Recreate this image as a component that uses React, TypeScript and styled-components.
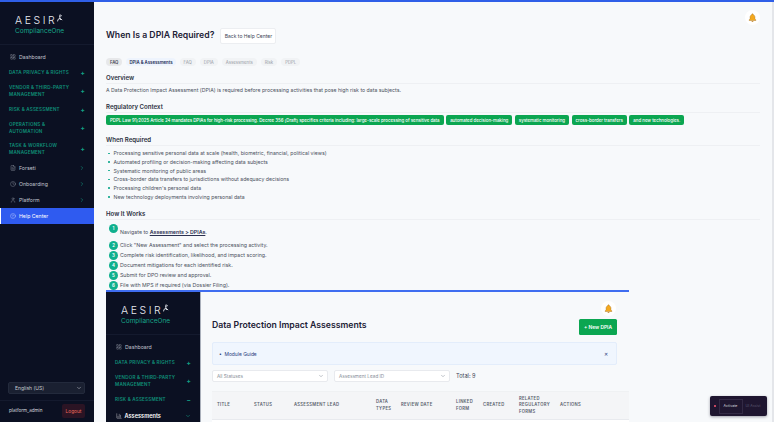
import { BarChart3, ChevronDown, ChevronRight, CircleHelp, Clock, FileText, LayoutGrid, User } from 'lucide-react';
import styled, { createGlobalStyle } from 'styled-components';

const GlobalStyle = createGlobalStyle`
  html, body {
    margin: 0;
    height: 422px;
    overflow: hidden;
    font-family: Inter, 'Liberation Sans', sans-serif;
    background: #f7f9fb;
  }
  * { box-sizing: border-box; }
`;

const Page = styled.div`
  position: relative;
  display: flex;
  width: 774px;
  height: 422px;
  overflow: hidden;
  border-top: 2px solid #2f5fe8;
`;

const Sidebar = styled.aside`
  flex: 0 0 94px;
  width: 94px;
  height: 420px;
  display: flex;
  flex-direction: column;
  background: #0b1022;
  color: #c6cad3;
`;

const LogoBlock = styled.div`
  height: 43px;
  padding: 12px 0 0 15px;
  border-bottom: 1px solid #141a2e;
  flex: none;
`;

const LogoWord = styled.div`
  display: flex;
  align-items: flex-start;
  height: 13px;
  font-size: 10.5px;
  line-height: 13px;
  letter-spacing: 2.6px;
  font-weight: 300;
  color: #e8eaf0;
`;

const LogoSub = styled.div`
  font-size: 6.5px;
  line-height: 8px;
  color: #17a589;
`;

const Nav = styled.nav`
  display: flex;
  flex-direction: column;
  padding-top: 4px;
`;

const NavItem = styled.div<{ $active?: boolean; $strong?: boolean }>`
  position: relative;
  display: flex;
  align-items: center;
  gap: ${(p) => (p.$strong ? 2.5 : 3)}px;
  height: 16px;
  padding: 0 9px 0 ${(p) => (p.$active ? 9 : 10)}px;
  font-size: ${(p) => (p.$strong ? 5.6 : 5.2)}px;
  font-weight: ${(p) => (p.$strong ? 600 : 400)};
  color: ${(p) => (p.$active || p.$strong ? '#fff' : '#c0c4ce')};
  background-color: ${(p) => (p.$active ? '#2f5bf0' : 'transparent')};
  border-left: ${(p) => (p.$active ? '1px solid #fff' : 'none')};
  background-image: ${(p) =>
    p.$active ? 'radial-gradient(rgba(255,255,255,.16) .5px, transparent .6px)' : 'none'};
  background-size: 4px 4px;
  svg { flex: none; }
`;

const NavLabel = styled.span`
  flex: 1;
`;

const NavGroup = styled.div<{ $tall?: boolean }>`
  display: flex;
  align-items: center;
  justify-content: space-between;
  min-height: ${(p) => (p.$tall ? 21 : 16)}px;
  padding: 0 9px 0 9px;
  font-size: 4.6px;
  line-height: 6.4px;
  font-weight: 600;
  letter-spacing: .2px;
  color: #0f8f78;
`;

const PlusMark = styled.span`
  font-size: 6.5px;
  font-weight: 700;
  color: #12a186;
`;

const SidebarFoot = styled.div`
  margin-top: auto;
  flex: none;
`;

const LangSelect = styled.div`
  display: flex;
  align-items: center;
  justify-content: space-between;
  height: 12px;
  margin: 0 9px 6px 8px;
  padding: 0 2px 0 6px;
  border-radius: 2px;
  background: #1a2031;
  border: 1px solid #232a3c;
  font-size: 5px;
  color: #c6cad3;
`;

const UserRow = styled.div`
  display: flex;
  align-items: center;
  justify-content: space-between;
  height: 20px;
  margin-bottom: 2px;
  padding: 0 9px;
  border-top: 1px solid #141a2e;
  font-size: 4.6px;
  color: #d5d8df;
`;

const LogoutButton = styled.div`
  display: flex;
  align-items: center;
  justify-content: center;
  width: 23px;
  height: 14px;
  border-radius: 2px;
  background: #2b1424;
  color: #f06a5c;
  font-size: 4.8px;
`;

const Main = styled.main`
  flex: 1;
  min-width: 0;
  padding: 26px 0 0 12px;
  background: #f7f9fb;
`;

const ScrollTrack = styled.div`
  flex: 0 0 2px;
  background: #e4e6ea;
`;

const BellCircle = styled.div<{ $top: number; $left: number }>`
  position: absolute;
  top: ${(p) => p.$top}px;
  left: ${(p) => p.$left}px;
  display: flex;
  align-items: center;
  justify-content: center;
  width: 15px;
  height: 15px;
  border-radius: 50%;
  background: #fff;
`;

const HeaderRow = styled.div`
  display: flex;
  align-items: center;
  gap: 6px;
  height: 16px;
`;

const Title = styled.h1`
  margin: 0 0 3px;
  font-size: 8.7px;
  font-weight: 600;
  color: #1d2236;
  line-height: 12px;
`;

const BackButton = styled.div`
  display: flex;
  align-items: center;
  justify-content: center;
  width: 56px;
  height: 16px;
  background: #fff;
  border: 1px solid #eceef1;
  border-radius: 2px;
  font-size: 5px;
  color: #3e4455;
`;

const ChipRow = styled.div`
  display: flex;
  gap: 4px;
  margin-top: 14px;
`;

const Chip = styled.span<{ $tone?: 'gray' | 'blue' }>`
  display: flex;
  align-items: center;
  height: 8px;
  padding: 0 ${(p) => (p.$tone === 'blue' ? 3 : 4)}px;
  border-radius: 4px;
  font-size: 4.3px;
  font-weight: ${(p) => (p.$tone ? 600 : 400)};
  color: ${(p) => (p.$tone === 'blue' ? '#232c55' : p.$tone === 'gray' ? '#4a4f5c' : '#9499a3')};
  background: ${(p) =>
    p.$tone === 'blue' ? '#eef4fd' : p.$tone === 'gray' ? '#e7e8ea' : '#f1f3f5'};
`;

const Section = styled.section`
  width: 654px;
`;

const SectionTitle = styled.h2<{ $gap: number }>`
  margin: ${(p) => p.$gap}px 0 0;
  padding-bottom: 1px;
  border-bottom: 1px solid #eef0f3;
  font-size: 6.1px;
  line-height: 9px;
  font-weight: 600;
  color: #2b3040;
`;

const Paragraph = styled.p`
  margin: 2px 0 0;
  font-size: 5.2px;
  line-height: 8px;
  color: #4b5160;
`;

const TagRow = styled.div`
  display: flex;
  gap: 2.6px;
  margin-top: 2px;
  letter-spacing: -.02px;
`;

const Tag = styled.span`
  display: flex;
  align-items: center;
  height: 10px;
  padding: 0 4px;
  border-radius: 2px;
  background: #0ba651;
  color: #fff;
  font-size: 4.4px;
  font-weight: 500;
  white-space: nowrap;
`;

const BulletList = styled.ul`
  height: 52px;
  margin: 3px 0 0;
  padding: 0;
  list-style: none;
`;

const Bullet = styled.li`
  display: flex;
  align-items: center;
  gap: 4px;
  height: 8.7px;
  padding-left: 2px;
  font-size: 5.2px;
  color: #4b5160;
  &::before {
    content: '';
    width: 1.5px;
    height: 1.5px;
    border-radius: 50%;
    background: #12a98d;
  }
`;

const StepList = styled.ol`
  margin: 4px 0 0;
  padding: 0;
  list-style: none;
`;

const Step = styled.li<{ $first?: boolean }>`
  display: flex;
  align-items: ${(p) => (p.$first ? 'flex-start' : 'center')};
  gap: 2px;
  height: ${(p) => (p.$first ? 16 : 10)}px;
  padding-left: 3px;
  font-size: 5.25px;
  color: #4b5160;
`;

const StepNum = styled.span`
  display: flex;
  flex: none;
  align-items: center;
  justify-content: center;
  width: 9px;
  height: 9px;
  border-radius: 50%;
  background: #10b08e;
  color: #fff;
  font-size: 4.4px;
  font-weight: 600;
`;

const StepText = styled.span<{ $first?: boolean }>`
  margin-top: ${(p) => (p.$first ? 4 : 0)}px;
  line-height: 8px;
  b {
    font-weight: 600;
    color: #2a3050;
    text-decoration: underline;
  }
`;

const Shot = styled.div`
  position: relative;
  display: flex;
  width: 523px;
  height: 140px;
  border-top: 2px solid #3f6df0;
`;

const ShotMain = styled.div`
  flex: 1;
  min-width: 0;
  padding: 27px 12px 0 11px;
  background: #f7f9fb;
  border-left: 1px solid #aab0bb;
`;

const ShotHead = styled.div`
  display: flex;
  align-items: center;
  justify-content: space-between;
  height: 15px;
`;

const NewButton = styled.div`
  display: flex;
  align-items: center;
  justify-content: center;
  width: 38px;
  height: 16px;
  border-radius: 1.5px;
  background: #0ba651;
  color: #fff;
  font-size: 4.9px;
  font-weight: 600;
`;

const GuideBox = styled.div`
  display: flex;
  align-items: center;
  justify-content: space-between;
  height: 23px;
  margin-top: 8px;
  padding: 0 8px 0 6px;
  border: 1px solid #e3edfb;
  border-radius: 2px;
  background-color: #f0f6fe;
  background-image: radial-gradient(#dfe8f5 .5px, transparent .6px);
  background-size: 4px 4px;
  font-size: 4.9px;
  color: #27387a;
`;

const FilterRow = styled.div`
  display: flex;
  align-items: center;
  gap: 6px;
  margin-top: 5px;
`;

const FilterSelect = styled.div`
  display: flex;
  align-items: center;
  justify-content: space-between;
  width: 116px;
  height: 12px;
  padding: 0 3px 0 4px;
  border: 1px solid #e8eaee;
  border-radius: 2px;
  background: #fff;
  font-size: 4.7px;
  color: #858b96;
`;

const TotalText = styled.span`
  font-size: 5.6px;
  color: #3e4455;
`;

const TableWrap = styled.div`
  width: 417px;
  margin-top: 9px;
  background: #f4f5f7;
  border-top: 1px solid #eff1f3;
`;

const HeadRow = styled.div`
  display: grid;
  grid-template-columns: 37px 40px 82px 25px 55px 27px 36px 41px 40px;
  align-items: center;
  height: 28px;
  padding-left: 5px;
  border-bottom: 1px solid #e8eaee;
  font-size: 4.2px;
  line-height: 6.6px;
  letter-spacing: .3px;
  font-weight: 600;
  color: #585e6c;
`;

const TableBody = styled.div`
  height: 20px;
  background: #fff;
`;

const ActivateBar = styled.div`
  position: absolute;
  top: 394px;
  left: 710px;
  display: flex;
  align-items: center;
  width: 57px;
  height: 20px;
  padding-left: 4px;
  border-radius: 2px;
  background: #1f1630;
  box-shadow: 0 1px 3px rgba(30, 30, 50, .4);
  font-size: 3.6px;
  color: #d8d6de;
`;

const ActivateDot = styled.span`
  width: 1.5px;
  height: 1.5px;
  border-radius: 50%;
  background: #e2506a;
`;

const ActivateBtn = styled.span`
  display: flex;
  align-items: center;
  justify-content: center;
  width: 24px;
  height: 15px;
  margin: 0 3px 0 3px;
  border: 1px solid #332a45;
`;

const ActivateHint = styled.span`
  color: #5e5870;
`;

const LogoFigure = () => (
  <svg width="6" height="9" viewBox="0 0 6 9" fill="none" stroke="#e8eaf0" strokeWidth=".9">
    <path d="M3.2 .4 2.6 2.4 4.8 1.6M2.6 2.4 3 4.4 5.2 6M3 4.4 1 5.4.6 7.4M3 4.4l.6 1.6" />
  </svg>
);

const BellIcon = () => (
  <svg width="9" height="9" viewBox="0 0 24 24">
    <path
      d="M12 2a2 2 0 0 0-2 2v.6C7 5.600 5.500 8.200 5.500 11v4.200L3 18.500V20h18v-1.500l-2.500-3.300V11c0-2.800-1.500-5.400-4.500-6.400V4a2 2 0 0 0-2-2z"
      fill="#f5a91f"
      stroke="#9c6a1a"
      strokeWidth="1"
    />
    <path d="M9.500 21a2.500 2.500 0 0 0 5 0z" fill="#b5761a" />
  </svg>
);

const Brand = () => (
  <LogoBlock>
    <LogoWord>
      AESIR
      <LogoFigure />
    </LogoWord>
    <LogoSub>ComplianceOne</LogoSub>
  </LogoBlock>
);

const OUTER_TAGS = [
  'PDPL Law 91/2025 Article 24 mandates DPIAs for high-risk processing. Decree 356 (Draft) specifies criteria including: large-scale processing of sensitive data',
  'automated decision-making',
  'systematic monitoring',
  'cross-border transfers',
  'and new technologies.',
];

const REQUIRED = [
  'Processing sensitive personal data at scale (health, biometric, financial, political views)',
  'Automated profiling or decision-making affecting data subjects',
  'Systematic monitoring of public areas',
  'Cross-border data transfers to jurisdictions without adequacy decisions',
  "Processing children's personal data",
  'New technology deployments involving personal data',
];

const STEPS = [
  'Click "New Assessment" and select the processing activity.',
  'Complete risk identification, likelihood, and impact scoring.',
  'Document mitigations for each identified risk.',
  'Submit for DPO review and approval.',
  'File with MPS if required (via Dossier Filing).',
];

const TABLE_HEAD = [
  'TITLE',
  'STATUS',
  'ASSESSMENT LEAD',
  <>DATA<br />TYPES</>,
  'REVIEW DATE',
  <>LINKED<br />FORM</>,
  'CREATED',
  <>RELATED<br />REGULATORY<br />FORMS</>,
  'ACTIONS',
];

const App = (): JSX.Element => (
  <>
    <GlobalStyle />
    <Page>
      <Sidebar>
        <Brand />
        <Nav>
          <NavItem>
            <LayoutGrid size={6} strokeWidth={1.2} />
            <NavLabel>Dashboard</NavLabel>
          </NavItem>
          <NavGroup>
            DATA PRIVACY &amp; RIGHTS<PlusMark>+</PlusMark>
          </NavGroup>
          <NavGroup $tall>
            <span>VENDOR &amp; THIRD-PARTY<br />MANAGEMENT</span>
            <PlusMark>+</PlusMark>
          </NavGroup>
          <NavGroup>
            RISK &amp; ASSESSMENT<PlusMark>+</PlusMark>
          </NavGroup>
          <NavGroup $tall>
            <span>OPERATIONS &amp;<br />AUTOMATION</span>
            <PlusMark>+</PlusMark>
          </NavGroup>
          <NavGroup $tall>
            <span>TASK &amp; WORKFLOW<br />MANAGEMENT</span>
            <PlusMark>+</PlusMark>
          </NavGroup>
          <NavItem>
            <FileText size={6} strokeWidth={1.2} />
            <NavLabel>Forseti</NavLabel>
            <ChevronRight size={6} color="#12a186" />
          </NavItem>
          <NavItem>
            <Clock size={6} strokeWidth={1.2} />
            <NavLabel>Onboarding</NavLabel>
            <ChevronRight size={6} color="#12a186" />
          </NavItem>
          <NavItem>
            <User size={6} strokeWidth={1.2} />
            <NavLabel>Platform</NavLabel>
            <ChevronRight size={6} color="#12a186" />
          </NavItem>
          <NavItem $active>
            <CircleHelp size={6} strokeWidth={1.2} />
            <NavLabel>Help Center</NavLabel>
          </NavItem>
        </Nav>
        <SidebarFoot>
          <LangSelect>
            English (US)
            <ChevronDown size={6} />
          </LangSelect>
          <UserRow>
            platform_admin
            <LogoutButton>Logout</LogoutButton>
          </UserRow>
        </SidebarFoot>
      </Sidebar>

      <Main>
        <HeaderRow>
          <Title>When Is a DPIA Required?</Title>
          <BackButton>Back to Help Center</BackButton>
        </HeaderRow>
        <ChipRow>
          <Chip $tone="gray">FAQ</Chip>
          <Chip $tone="blue">DPIA &amp; Assessments</Chip>
          <Chip>FAQ</Chip>
          <Chip>DPIA</Chip>
          <Chip>Assessments</Chip>
          <Chip>Risk</Chip>
          <Chip>PDPL</Chip>
        </ChipRow>
        <Section>
          <SectionTitle $gap={7}>Overview</SectionTitle>
          <Paragraph>
            A Data Protection Impact Assessment (DPIA) is required before processing activities that
            pose high risk to data subjects.
          </Paragraph>
          <SectionTitle $gap={8}>Regulatory Context</SectionTitle>
          <TagRow>
            {OUTER_TAGS.map((tag) => (
              <Tag key={tag}>{tag}</Tag>
            ))}
          </TagRow>
          <SectionTitle $gap={10}>When Required</SectionTitle>
          <BulletList>
            {REQUIRED.map((item) => (
              <Bullet key={item}>{item}</Bullet>
            ))}
          </BulletList>
          <SectionTitle $gap={8}>How It Works</SectionTitle>
          <StepList>
            <Step $first>
              <StepNum>1</StepNum>
              <StepText $first>
                Navigate to <b>Assessments &gt; DPIAs</b>.
              </StepText>
            </Step>
            {STEPS.map((step, idx) => (
              <Step key={step}>
                <StepNum>{idx + 2}</StepNum>
                <StepText>{step}</StepText>
              </Step>
            ))}
          </StepList>
        </Section>

        <Shot>
          <Sidebar>
            <Brand />
            <Nav>
              <NavItem>
                <LayoutGrid size={6} strokeWidth={1.2} />
                <NavLabel>Dashboard</NavLabel>
              </NavItem>
              <NavGroup>
                DATA PRIVACY &amp; RIGHTS<PlusMark>+</PlusMark>
              </NavGroup>
              <NavGroup $tall>
                <span>VENDOR &amp; THIRD-PARTY<br />MANAGEMENT</span>
                <PlusMark>+</PlusMark>
              </NavGroup>
              <NavGroup>
                RISK &amp; ASSESSMENT<PlusMark>−</PlusMark>
              </NavGroup>
              <NavItem $strong>
                <BarChart3 size={6} strokeWidth={1.4} />
                <NavLabel>Assessments</NavLabel>
                <ChevronDown size={6} color="#12a186" />
              </NavItem>
            </Nav>
          </Sidebar>
          <ShotMain>
            <ShotHead>
              <Title>Data Protection Impact Assessments</Title>
              <NewButton>+ New DPIA</NewButton>
            </ShotHead>
            <GuideBox>
              <span>•&nbsp;&nbsp;Module Guide</span>
              <span>✕</span>
            </GuideBox>
            <FilterRow>
              <FilterSelect>
                All Statuses
                <ChevronDown size={6} />
              </FilterSelect>
              <FilterSelect>
                Assessment Lead ID
                <ChevronDown size={6} />
              </FilterSelect>
              <TotalText>Total: 9</TotalText>
            </FilterRow>
            <TableWrap>
              <HeadRow>
                {TABLE_HEAD.map((cell, idx) => (
                  <span key={idx}>{cell}</span>
                ))}
              </HeadRow>
              <TableBody />
            </TableWrap>
          </ShotMain>
          <BellCircle $top={9} $left={495}>
            <BellIcon />
          </BellCircle>
        </Shot>
      </Main>
      <ScrollTrack />

      <BellCircle $top={8} $left={745}>
        <BellIcon />
      </BellCircle>
      <ActivateBar>
        <ActivateDot />
        <ActivateBtn>Activate</ActivateBtn>
        <ActivateHint>UI Assist</ActivateHint>
      </ActivateBar>
    </Page>
  </>
);

export default App;
